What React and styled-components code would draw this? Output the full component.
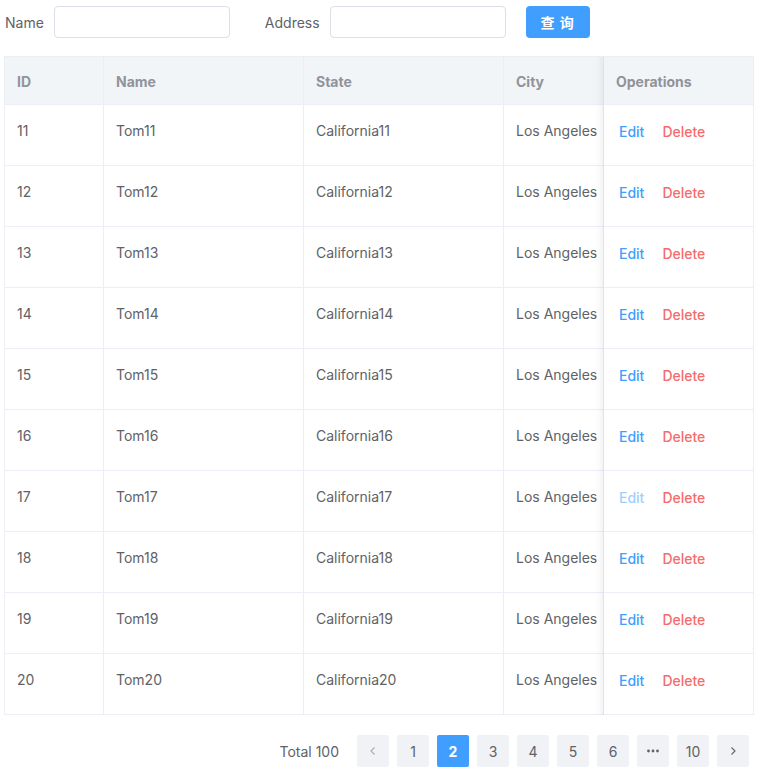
import React from "react";
import styled, { createGlobalStyle, css } from "styled-components";

const GlobalStyle = createGlobalStyle`
  body {
    margin: 0;
    background: #ffffff;
    font-family: Inter, "Noto Sans CJK SC", "Liberation Sans", sans-serif;
    color: #606266;
    font-size: 14px;
  }
`;

const rows = Array.from({ length: 10 }, (_, i) => ({
  id: 11 + i,
  name: `Tom${11 + i}`,
  state: `California${11 + i}`,
  city: "Los Angeles",
}));

const columns = [
  { key: "id", label: "ID", width: 99 },
  { key: "name", label: "Name", width: 200 },
  { key: "state", label: "State", width: 200 },
  { key: "city", label: "City", width: 100 },
];

const App = () => {
  return (
    <Page>
      <GlobalStyle />
      <SearchForm>
        <Field>
          <Label>Name</Label>
          <Input />
        </Field>
        <Field>
          <Label>Address</Label>
          <Input />
        </Field>
        <SearchButton>查 询</SearchButton>
      </SearchForm>

      <Table>
        <Row header>
          {columns.map((c) => (
            <HeadCell key={c.key} width={c.width}>
              {c.label}
            </HeadCell>
          ))}
          <HeadCell width={149} fixed last>
            Operations
          </HeadCell>
        </Row>
        {rows.map((r) => (
          <Row key={r.id}>
            {columns.map((c) => (
              <Cell key={c.key} width={c.width}>
                {r[c.key]}
              </Cell>
            ))}
            <Cell width={149} fixed last>
              <Ops>
                <LinkButton faded={r.id === 17}>Edit</LinkButton>
                <LinkButton danger>Delete</LinkButton>
              </Ops>
            </Cell>
          </Row>
        ))}
      </Table>

      <Pagination>
        <Total>Total 100</Total>
        <PageButton>
          <svg width="12" height="12" viewBox="0 0 12 12">
            <path d="M7.5 2.5L4 6l3.5 3.5" fill="none" stroke="#a8abb2" strokeWidth="1.1" />
          </svg>
        </PageButton>
        {["1", "2", "3", "4", "5", "6"].map((p) => (
          <PageButton key={p} active={p === "2"}>
            {p}
          </PageButton>
        ))}
        <PageButton>
          <svg width="14" height="4" viewBox="0 0 14 4">
            <circle cx="2.5" cy="2" r="1.4" fill="#606266" />
            <circle cx="7" cy="2" r="1.4" fill="#606266" />
            <circle cx="11.5" cy="2" r="1.4" fill="#606266" />
          </svg>
        </PageButton>
        <PageButton>10</PageButton>
        <PageButton>
          <svg width="12" height="12" viewBox="0 0 12 12">
            <path d="M4.5 2.5L8 6l-3.5 3.5" fill="none" stroke="#606266" strokeWidth="1.1" />
          </svg>
        </PageButton>
      </Pagination>
    </Page>
  );
};

const Page = styled.div`
  padding: 6px 11px 0 4px;
`;

const SearchForm = styled.div`
  display: flex;
  align-items: center;
  height: 32px;
  padding-left: 1px;
`;

const Field = styled.div`
  display: flex;
  align-items: center;
  margin-right: 20px;
  &:nth-child(2) {
    margin-left: 15px;
  }
`;

const Label = styled.label`
  font-size: 14px;
  color: #606266;
  margin-right: 10px;
`;

const Input = styled.input`
  box-sizing: border-box;
  width: 176px;
  height: 32px;
  border: 1px solid #dcdfe6;
  border-radius: 4px;
  outline: none;
  padding: 0 11px;
  font-size: 14px;
`;

const SearchButton = styled.button`
  box-sizing: border-box;
  width: 64px;
  height: 32px;
  border: none;
  border-radius: 4px;
  background: #409eff;
  color: #ffffff;
  font-family: "Noto Sans CJK SC", sans-serif;
  font-weight: 700;
  font-size: 14px;
  letter-spacing: 1px;
`;

const Table = styled.div`
  margin-top: 18px;
  width: 750px;
  border: 1px solid #ebeef5;
  border-bottom: none;
  box-sizing: border-box;
`;

const Row = styled.div`
  display: flex;
  height: ${(p) => (p.header ? "48px" : "61px")};
  background: ${(p) => (p.header ? "#f2f5f8" : "#ffffff")};
  border-bottom: 1px solid #ebeef5;
  box-sizing: border-box;
`;

const cellBase = css`
  box-sizing: border-box;
  width: ${(p) => p.width}px;
  flex: 0 0 auto;
  padding: 0 12px;
  line-height: 23px;
  white-space: nowrap;
  border-right: ${(p) => (p.last ? "none" : "1px solid #ebeef5")};
  position: relative;
  ${(p) =>
    p.fixed &&
    css`
      z-index: 1;
      &::before {
        content: "";
        position: absolute;
        left: -10px;
        top: 0;
        bottom: -1px;
        width: 10px;
        box-shadow: inset -10px 0 8px -8px rgba(0, 0, 0, 0.08);
      }
    `}
`;

const HeadCell = styled.div`
  ${cellBase}
  padding-top: 13px;
  color: #909399;
  font-weight: 700;
  font-size: 14px;
  background: #f2f5f8;
`;

const Cell = styled.div`
  ${cellBase}
  padding-top: 14px;
  color: #606266;
  background: ${(p) => (p.fixed ? "#ffffff" : "transparent")};
`;

const Ops = styled.div`
  display: flex;
  gap: 18px;
  padding-left: 3px;
  padding-top: 1px;
`;

const LinkButton = styled.span`
  font-size: 14px;
  font-weight: 500;
  color: ${(p) => (p.danger ? "#f56c6c" : p.faded ? "#a0cfff" : "#409eff")};
`;

const Pagination = styled.div`
  display: flex;
  justify-content: flex-end;
  align-items: center;
  gap: 8px;
  margin-top: 20px;
  width: 745px;
`;

const Total = styled.span`
  font-size: 14px;
  color: #606266;
  margin-right: 10px;
`;

const PageButton = styled.div`
  width: 32px;
  height: 32px;
  border-radius: 2px;
  display: flex;
  align-items: center;
  justify-content: center;
  font-size: 14px;
  background: ${(p) => (p.active ? "#409eff" : "#f0f2f5")};
  color: ${(p) => (p.active ? "#ffffff" : "#606266")};
  font-weight: ${(p) => (p.active ? 700 : 400)};
`;

export default App;
